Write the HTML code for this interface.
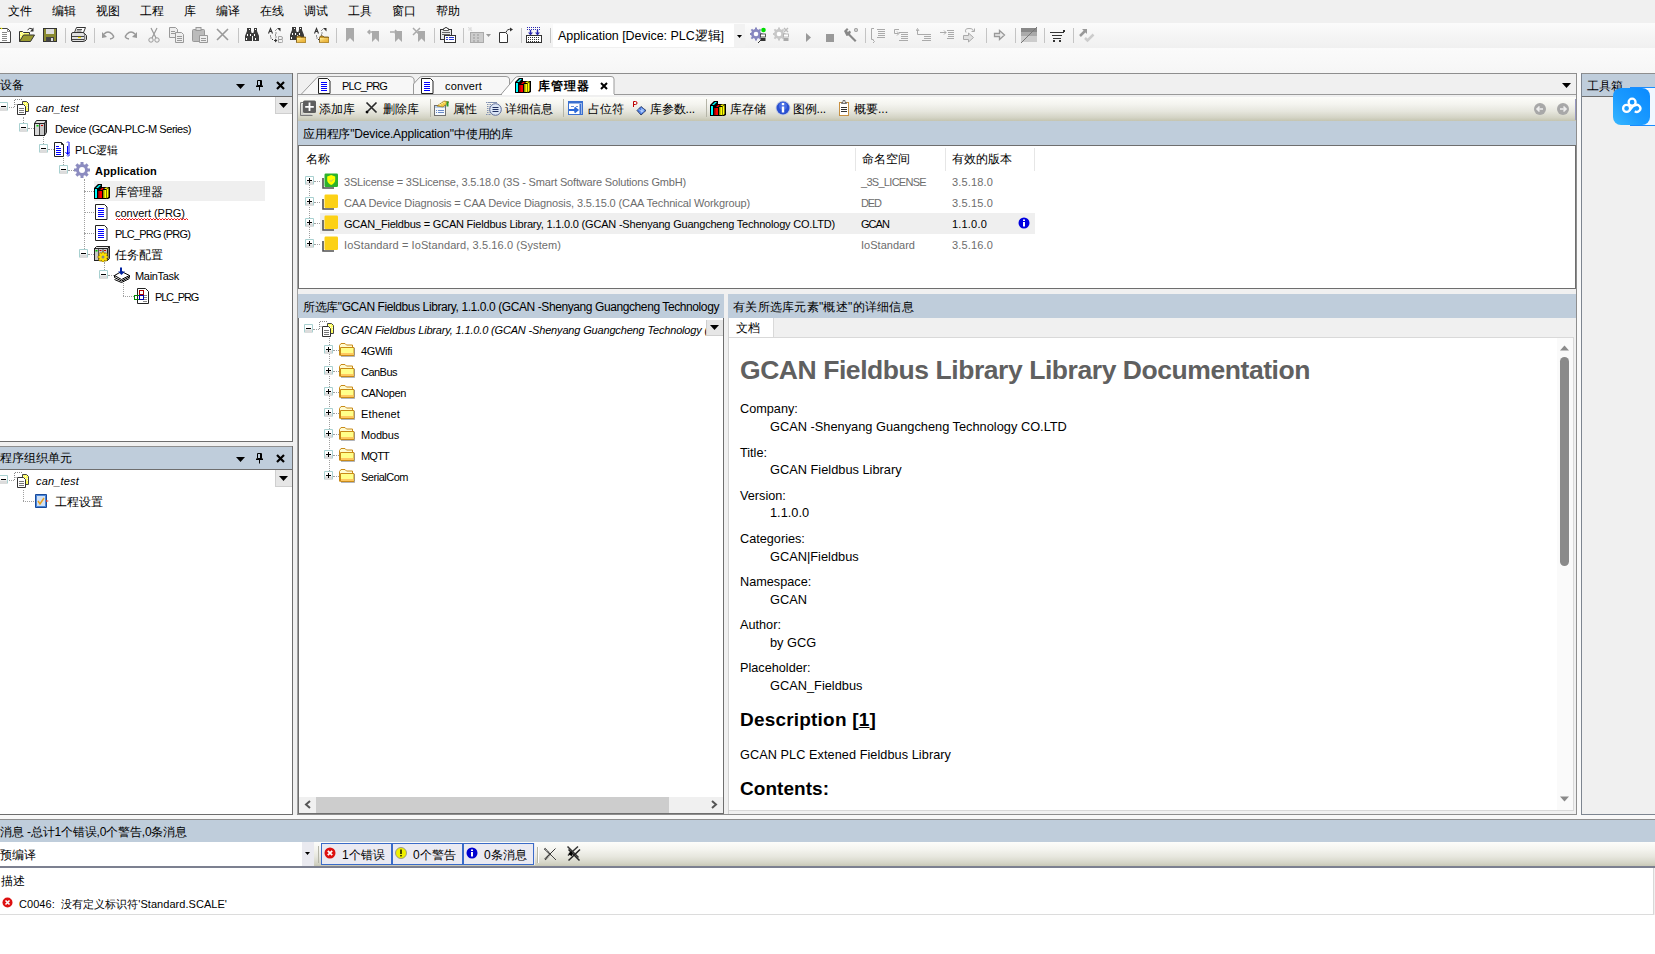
<!DOCTYPE html>
<html><head><meta charset="utf-8"><style>*{box-sizing:border-box;margin:0;padding:0}
html,body{width:1655px;height:954px;overflow:hidden;background:#f0f0f0;font-family:"Liberation Sans",sans-serif;font-size:12px;color:#000;position:relative}
.a{position:absolute}
.t{position:absolute;white-space:nowrap}
svg.a{overflow:visible}
</style></head><body>
<svg width="0" height="0" style="position:absolute">
<defs>
<linearGradient id="gfold" x1="0" y1="0" x2="1" y2="1"><stop offset="0" stop-color="#fff4a0"/><stop offset="0.5" stop-color="#f0c050"/><stop offset="1" stop-color="#e8b030"/></linearGradient>
<symbol id="i-proj" viewBox="0 0 16 16">
 <path d="M0.5 8V0.5H8" stroke="#888" stroke-dasharray="1 1" fill="none"/>
 <path d="M8.5 2.5h4l2 2v8h-6z" fill="#ffff60" stroke="#444"/>
 <path d="M9 4l1 1M11 4l1 1M9 6l1 1M11 6l1 1M13 6l1 1M9 8l1 1M11 8l1 1M13 8l1 1" stroke="#fff" stroke-width="0.8"/>
 <path d="M3.5 5.5h6l2 2v8h-8z" fill="#fff" stroke="#333"/>
 <path d="M5 9.5h5M5 11.5h5M5 13.5h5" stroke="#777"/>
 <path d="M0.5 5.5h3" stroke="#888" stroke-dasharray="1 1"/>
</symbol>
<symbol id="i-dev" viewBox="0 0 16 16">
 <path d="M0.5 3.5l2-3h10l-2 3z" fill="#e0e0e0" stroke="#222" stroke-linejoin="round"/>
 <path d="M10.5 3.5l2-3v12l-2 3z" fill="#888" stroke="#222" stroke-linejoin="round"/>
 <rect x="0.5" y="3.5" width="10" height="12" fill="#c8c8c8" stroke="#222"/>
 <rect x="1" y="4" width="4.5" height="11" fill="#d8d8d8"/>
 <path d="M5.5 4v11" stroke="#444"/>
 <rect x="2.5" y="5" width="2" height="1.5" fill="#0c0"/>
 <rect x="7" y="5" width="2" height="1" fill="#c00"/>
</symbol>
<symbol id="i-plc" viewBox="0 0 16 16">
 <path d="M0.5 1.5h7l2 2v12h-9z" fill="#fff" stroke="#222"/>
 <path d="M7.5 1.5v2h2" fill="none" stroke="#222"/>
 <path d="M2 5.5h3M2 7.5h5M2 9.5h5M2 11.5h5M2 13.5h5" stroke="#00f"/>
 <path d="M13 1.5a1 1 0 0 1 2 1v11a1 1 0 0 1-2 1" stroke="#00f" fill="none"/>
 <path d="M13.5 5v8M11.5 11l2 2.5 2-2.5" stroke="#00f" fill="none"/>
</symbol>
<symbol id="i-gear" viewBox="0 0 16 16">
 <g fill="#8c8cc0">
 <circle cx="8" cy="8" r="6"/>
 <rect x="6.5" y="0" width="3" height="16"/>
 <rect x="0" y="6.5" width="16" height="3"/>
 <rect x="6.5" y="0" width="3" height="16" transform="rotate(45 8 8)"/>
 <rect x="6.5" y="0" width="3" height="16" transform="rotate(-45 8 8)"/>
 </g>
 <circle cx="8" cy="8" r="3" fill="#fff"/>
</symbol>
<symbol id="i-lib" viewBox="0 0 16 16">
 <path d="M0 5L4 1h4v3h8v11l-2 1H0z" fill="#000"/>
 <rect x="1" y="6" width="2" height="9" fill="#00ffff"/>
 <path d="M2 5l3-3h2l-3 3z" fill="#00ffff"/>
 <rect x="4" y="8" width="4" height="7" fill="#ff0000"/>
 <rect x="4" y="8" width="1.5" height="7" fill="#900000"/>
 <path d="M6 7l2-2h2l-2 2z" fill="#ff0000"/>
 <rect x="9" y="7" width="3" height="8" fill="#ffff00"/>
 <rect x="9" y="7" width="1.5" height="8" fill="#909000"/>
 <path d="M12.5 6.5l2-1.5v9l-2 1.5z" fill="#ffff00"/>
 <path d="M10 6l2-1.5h2.5l-2 1.5z" fill="#ffff00"/>
</symbol>
<symbol id="i-pou" viewBox="0 0 16 16">
 <path d="M1.5 0.5h9l2.5 2.5v12.5h-11.5z" fill="#fff" stroke="#222"/>
 <path d="M4 4.5h6M4 6.5h6M4 8.5h6M4 10.5h6M4 12.5h6" stroke="#00f"/>
</symbol>
<symbol id="i-task" viewBox="0 0 16 16">
 <path d="M0.5 2.5l2-2h13l-2 2z" fill="#e8e8e8" stroke="#222"/>
 <rect x="0.5" y="2.5" width="13" height="12" fill="#c8c8c8" stroke="#222"/>
 <path d="M13.5 2.5l2-2v12l-2 2z" fill="#888" stroke="#222"/>
 <path d="M4.5 3v11M9 3v11" stroke="#555"/>
 <rect x="1.5" y="4" width="2" height="1.5" fill="#0c0"/>
 <rect x="5.5" y="4" width="2" height="1" fill="#c00"/>
 <rect x="10" y="4" width="2" height="1" fill="#c00"/>
 <g transform="translate(9 11)"><g fill="#ffe000" stroke="#806000" stroke-width="0.6">
 <path d="M-1 -5h2l0.5 1.6 1.6-0.9 1.4 1.4-0.9 1.6L5 -1v2l-1.4 0.3 0.9 1.6-1.4 1.4-1.6-0.9L1 5h-2l-0.5-1.6-1.6 0.9-1.4-1.4 0.9-1.6L-5 1v-2l1.6-0.5-0.9-1.6 1.4-1.4 1.6 0.9z"/></g>
 <circle r="1.5" fill="#888"/></g>
</symbol>
<symbol id="i-mtask" viewBox="0 0 16 16">
 <path d="M0.5 10.5l7 3.5 8-4" stroke="#000" fill="none"/>
 <path d="M0.5 12.5l7 3 8-4" stroke="#000" fill="none"/>
 <path d="M0.5 8.5l7-4 8 4-8 4z" fill="#fff" stroke="#000" stroke-linejoin="round"/>
 <path d="M0.5 8.5v2M15.5 8.5v2" stroke="#000"/>
 <path d="M7 0.5v5" stroke="#0020a0" stroke-width="2"/>
 <path d="M4 4.5l3.5 3.5 3.5-3.5z" fill="#0020a0"/>
</symbol>
<symbol id="i-call" viewBox="0 0 16 16">
 <path d="M3.5 0.5h8l3 3v12h-11z" fill="#fff" stroke="#222"/>
 <path d="M9 7.5h4M9 9.5h4M9 11.5h4M9 13.5h4" stroke="#888"/>
 <rect x="5.5" y="2.5" width="4" height="4" fill="none" stroke="#a00"/>
 <rect x="0.5" y="7.5" width="5" height="4" fill="none" stroke="#080"/>
 <rect x="5.5" y="7.5" width="4" height="4" fill="none" stroke="#00a"/>
</symbol>
<symbol id="i-settings" viewBox="0 0 16 16">
 <path d="M1.5 1.5h11v13h-11z" fill="#4a86d8" stroke="#1a4a9a"/>
 <rect x="3" y="3" width="8" height="10" fill="#cfe0f5"/>
 <path d="M4 8l2 3 4-6" stroke="#e8a020" stroke-width="1.5" fill="none"/>
 <path d="M12 9l3-1-3-1z" fill="#e04020"/>
</symbol>
<symbol id="i-folder" viewBox="0 0 16 16">
 <path d="M0.5 13.5V3.5l1.5-2h4l1.5 1.5h6v2.5" fill="#fffbd0" stroke="#c88a18"/>
 <path d="M1.5 13.5V5.5h13.5v8z" fill="#ffff8a" stroke="#c88a18"/>
 <rect x="2" y="11" width="12.5" height="2" fill="#ffc860"/>
 <path d="M2 14.5h13.5V6" stroke="#404858" stroke-opacity="0.4" fill="none"/>
</symbol>
<symbol id="i-libyel" viewBox="0 0 16 16">
 <path d="M1 5v10h11" fill="none" stroke="#505050" stroke-width="1.6"/>
 <rect x="2.5" y="0.5" width="13.5" height="13.5" rx="1.2" fill="#fcd116"/>
</symbol>
<symbol id="i-lic" viewBox="0 0 16 16">
 <path d="M1 5v10h11" fill="none" stroke="#505050" stroke-width="1.6"/>
 <rect x="2.5" y="0.5" width="13.5" height="13.5" rx="1.2" fill="#2db32d"/>
 <path d="M9.2 2l4 1.5v3.5c0 2.5-2 4-4 5-2-1-4-2.5-4-5V3.5z" fill="#ffff00"/>
 <path d="M7.8 7.2l1.3 1.3 2.2-2.2" stroke="#9a9" fill="none" stroke-width="0.8"/>
</symbol>
<symbol id="i-plus" viewBox="0 0 9 9">
 <rect x="0" y="0" width="9" height="9" fill="#fff"/>
 <path d="M0.5 8.5V0.5h8v8" fill="none" stroke="#a8d0d0"/>
 <rect x="1" y="5.5" width="7" height="3.5" fill="#dcdcdc"/>
 <path d="M2 4.5h5M4.5 2v5" stroke="#000"/>
</symbol>

<symbol id="i-minus" viewBox="0 0 9 9">
 <rect x="0" y="0" width="9" height="9" fill="#fff"/>
 <path d="M0.5 8.5V0.5h8v8" fill="none" stroke="#a8d0d0"/>
 <rect x="1" y="5.5" width="7" height="3.5" fill="#dcdcdc"/>
 <path d="M2 4.5h5" stroke="#000"/>
</symbol>
<symbol id="t-new" viewBox="0 0 16 16">
 <path d="M3.5 1.5h8l3 3v11h-11z" fill="#fff" stroke="#444"/>
 <path d="M11.5 1.5v3h3" fill="none" stroke="#888"/>
 <path d="M6 5.5h5M6 7.5h5M6 9.5h5M6 11.5h5M6 13.5h5" stroke="#888"/>
 <path d="M4 0l-2 3M0 3h3M1 6l2-1.5M5 2l1-1" stroke="#f0f000" stroke-width="1.2"/>
</symbol>
<symbol id="t-open" viewBox="0 0 16 16">
 <path d="M0.5 14.5v-10h3l1 1h6v2" fill="#ffff70" stroke="#333"/>
 <path d="M1 6l2 2M1 9l2 2M3 5l2 2" stroke="#fff" stroke-width="0.7"/>
 <path d="M0.5 14.5l4-6.5h11l-4 6.5z" fill="#9a9a30" stroke="#333"/>
 <path d="M8.5 3q2-3 5-1" stroke="#333" fill="none"/>
 <path d="M14.5 0.5v4h-3.5z" fill="#333"/>
</symbol>
<symbol id="t-save" viewBox="0 0 16 16">
 <rect x="1.5" y="1.5" width="13" height="13" fill="#8a8a30" stroke="#333"/>
 <rect x="4" y="2" width="8" height="5" fill="#ddd"/>
 <rect x="4" y="10" width="8" height="4.5" fill="#444"/>
 <rect x="9" y="11" width="2" height="3" fill="#ddd"/>
</symbol>
<symbol id="t-print" viewBox="0 0 16 16">
 <path d="M5.5 0.5h9l-2 5h-9z" fill="#fff" stroke="#333"/>
 <path d="M6 2.5h5M5.5 4h5" stroke="#555"/>
 <rect x="0.5" y="5.5" width="13" height="9" rx="1.5" fill="#e0e0e0" stroke="#333"/>
 <path d="M1 9.5h12M1 12.5h12" stroke="#444"/>
 <path d="M7 10.5h3" stroke="#f0e000" stroke-width="1.2"/>
 <path d="M13.5 6.5l2 2v4l-2 2" fill="#ccc" stroke="#333"/>
</symbol>
<symbol id="t-undo" viewBox="0 0 16 16">
 <path d="M4 7q4-4 8 0t-2 5" stroke="#999" stroke-width="1.5" fill="none"/>
 <path d="M2 11V5l5 5z" fill="#999"/>
</symbol>
<symbol id="t-redo" viewBox="0 0 16 16">
 <path d="M12 7q-4-4-8 0t2 5" stroke="#999" stroke-width="1.5" fill="none"/>
 <path d="M14 11V5l-5 5z" fill="#999"/>
</symbol>
<symbol id="t-cut" viewBox="0 0 16 16">
 <path d="M5 1l5 10M11 1L6 11" stroke="#999" stroke-width="1.2"/>
 <circle cx="5" cy="13" r="2.2" fill="none" stroke="#999"/><circle cx="11" cy="13" r="2.2" fill="none" stroke="#999"/>
</symbol>
<symbol id="t-copy" viewBox="0 0 16 16">
 <path d="M0.5 0.5h6l2 2v8h-8z" fill="#eee" stroke="#999"/>
 <path d="M6.5 5.5h6l2 2v8h-8z" fill="#eee" stroke="#999"/>
 <path d="M8 9.5h5M8 11.5h5M8 13.5h5M2 4.5h4M2 6.5h4" stroke="#999"/>
</symbol>
<symbol id="t-paste" viewBox="0 0 16 16">
 <rect x="0.5" y="2.5" width="12" height="12" rx="1" fill="#bbb" stroke="#999"/>
 <rect x="4" y="0.5" width="5" height="3" fill="#ddd" stroke="#999"/>
 <path d="M7.5 8.5h8v7h-8z" fill="#eee" stroke="#999"/>
 <path d="M9 11.5h5M9 13.5h5" stroke="#999"/>
</symbol>
<symbol id="t-del" viewBox="0 0 16 16">
 <path d="M2 2l11 11M13 2L2 13" stroke="#999" stroke-width="1.6"/>
</symbol>
<symbol id="t-find" viewBox="0 0 16 16"><path d="M4 1h3v3l1 3v7H1V9l2-5V1z M10 1h3v3l2 5v5H9V7l1-3z M7 6h3v3H7z" fill="#3a3a3a"/>
 <rect x="5" y="2" width="1" height="1" fill="#fff"/><rect x="11" y="2" width="1" height="1" fill="#fff"/>
 <rect x="3" y="7" width="1" height="2" fill="#fff"/><rect x="6" y="7" width="1" height="2" fill="#fff"/>
 <rect x="10" y="7" width="1" height="2" fill="#fff"/>
 <rect x="2" y="11" width="1" height="2" fill="#fff"/><rect x="11" y="11" width="1" height="2" fill="#fff"/></symbol>
<symbol id="t-repl" viewBox="0 0 16 16"><path d="M1.5 6.5L3.5 1.5 5.5 6.5M2.3 4.5h2.4" stroke="#333" fill="none" stroke-width="1.1"/>
 <path d="M3.5 8.5v1M4 10.5v1M5 12.5h1M7 13.5h1" stroke="#333"/>
 <path d="M8.5 3.5l1-1M9 5.5v1M8.5 7.5v1M9 9.5v1" stroke="#333"/>
 <path d="M10 1h3.5v3.5z" fill="#333"/>
 <path d="M8 11.5l2.5 2-2.5 2z" fill="#333"/>
 <path d="M11.5 9.5h2.5a1.5 1.5 0 0 1 0 3h-2.5v-3M11.5 12.5h3a1.5 1.5 0 0 1 0 3h-3z" stroke="#999" fill="none" stroke-width="0.9"/>
</symbol>
<symbol id="t-findp" viewBox="0 0 16 16"><g transform="translate(-1 -1)"><path d="M4 1h3v3l1 3v7H1V9l2-5V1z M10 1h3v3l2 5v5H9V7l1-3z M7 6h3v3H7z" fill="#3a3a3a"/>
 <rect x="5" y="2" width="1" height="1" fill="#fff"/><rect x="11" y="2" width="1" height="1" fill="#fff"/>
 <rect x="3" y="7" width="1" height="2" fill="#fff"/><rect x="6" y="7" width="1" height="2" fill="#fff"/>
 <rect x="10" y="7" width="1" height="2" fill="#fff"/>
 <rect x="2" y="11" width="1" height="2" fill="#fff"/><rect x="11" y="11" width="1" height="2" fill="#fff"/></g><path d="M6.5 15.5v-5l1-1.5h2.5l1 1h4.5v5.5z" fill="#c89a30" stroke="#705010" stroke-width="0.8"/>
 <path d="M7 11h8.5v4.5H7z" fill="url(#gfold)"/></symbol>
<symbol id="t-replp" viewBox="0 0 16 16"><path d="M1.5 6.5L3.5 1.5 5.5 6.5M2.3 4.5h2.4" stroke="#333" fill="none" stroke-width="1.1"/>
 <path d="M3.5 8.5v1M4 10.5v1M5 12.5h1M7 13.5h1" stroke="#333"/>
 <path d="M8.5 3.5l1-1M9 5.5v1M8.5 7.5v1M9 9.5v1" stroke="#333"/>
 <path d="M10 1h3.5v3.5z" fill="#333"/><path d="M6.5 15.5v-5l1-1.5h2.5l1 1h4.5v5.5z" fill="#c89a30" stroke="#705010" stroke-width="0.8"/>
 <path d="M7 11h8.5v4.5H7z" fill="url(#gfold)"/></symbol>
<symbol id="t-bm" viewBox="0 0 16 16"><path d="M3 1h8v14l-4-4-4 4z" fill="#aaa"/></symbol>
<symbol id="t-bmprev" viewBox="0 0 16 16"><path d="M6 4h7v11l-3.5-3.5L6 15z" fill="#aaa"/><path d="M8 5H2M4 3L2 5l2 2" stroke="#aaa" stroke-width="1.5" fill="none"/></symbol>
<symbol id="t-bmnext" viewBox="0 0 16 16"><path d="M6 4h7v11l-3.5-3.5L6 15z" fill="#aaa"/><path d="M1 5h7M6 3l2 2-2 2" stroke="#aaa" stroke-width="1.5" fill="none"/></symbol>
<symbol id="t-bmclr" viewBox="0 0 16 16"><path d="M6 4h7v11l-3.5-3.5L6 15z" fill="#aaa"/><path d="M1 1l7 7M8 1L1 8" stroke="#aaa" stroke-width="1.5"/></symbol>
<symbol id="t-pastep" viewBox="0 0 16 16">
 <rect x="0.5" y="2.5" width="11" height="10" fill="#e8e8e8" stroke="#333"/>
 <path d="M3.5 3.5v-2h1.5v-1h2v1h1.5v2z" fill="#fff" stroke="#333" stroke-width="0.8"/>
 <path d="M2 5.5h8M2 7.5h8" stroke="#666"/>
 <rect x="4.5" y="8.5" width="11" height="7" fill="#fff" stroke="#333"/>
 <path d="M6 10.5h2M9 10.5h5M6 12.5h2M9 12.5h5" stroke="#2a3ad0"/>
</symbol>
<symbol id="t-grid" viewBox="0 0 16 16">
 <rect x="2.5" y="5.5" width="13" height="10" fill="#ccc" stroke="#aaa"/>
 <path d="M5 8h2M9 8h2M5 11h2M9 11h2M5 14h2M9 14h2" stroke="#999"/>
 <path d="M0 0l4 4M3 0v3M0 3h3" stroke="#ddd" stroke-width="1.2"/>
</symbol>
<symbol id="t-docarr" viewBox="0 0 16 16">
 <path d="M1.5 5.5h6l2 2v8h-8z" fill="#fff" stroke="#333"/>
 <path d="M8 5.5q1-4 5.5-3" stroke="#333" fill="none"/>
 <path d="M12 0.5l3 2-3 2z" fill="#333"/>
</symbol>
<symbol id="t-dl" viewBox="0 0 16 16">
 <rect x="0.5" y="8.5" width="15" height="7" fill="#fff" stroke="#333"/>
 <path d="M2 10.5h12M2 12.5h12M2 14.5h12" stroke="#333" stroke-dasharray="1 1"/>
 <path d="M1 0.5h14M1 2.5h14" stroke="#2a2ab0" stroke-dasharray="1 1"/>
 <path d="M4.5 3v4M11.5 3v4" stroke="#2a2ab0" stroke-width="1.4"/>
 <path d="M2 5.5l2.5 3 2.5-3zM9 5.5l2.5 3 2.5-3z" fill="#2a2ab0"/>
</symbol>
<symbol id="t-login" viewBox="0 0 16 16">
 <g fill="#8888c0"><circle cx="6" cy="7" r="5"/><rect x="5" y="0.5" width="2" height="13"/><rect x="-0.5" y="6" width="13" height="2"/><rect x="5" y="0.5" width="2" height="13" transform="rotate(45 6 7)"/><rect x="5" y="0.5" width="2" height="13" transform="rotate(-45 6 7)"/></g>
 <circle cx="6" cy="7" r="2.3" fill="#fff"/>
 <circle cx="13.5" cy="3" r="2.3" fill="#0d0"/>
 <rect x="10.5" y="7" width="5" height="3" fill="#fff" stroke="#333" stroke-width="0.8"/>
 <rect x="10.5" y="11" width="5" height="3" fill="#333"/>
 <path d="M8 16l3-3" stroke="#333"/>
</symbol>
<symbol id="t-logout" viewBox="0 0 16 16">
 <g fill="#c8c8c8"><circle cx="6" cy="7" r="5"/><rect x="5" y="0.5" width="2" height="13"/><rect x="-0.5" y="6" width="13" height="2"/><rect x="5" y="0.5" width="2" height="13" transform="rotate(45 6 7)"/><rect x="5" y="0.5" width="2" height="13" transform="rotate(-45 6 7)"/></g>
 <circle cx="6" cy="7" r="2.3" fill="#fff"/>
 <path d="M11 1l4 4M15 1l-4 4" stroke="#bbb" stroke-width="1.4"/>
 <rect x="10.5" y="7" width="5" height="3" fill="#fff" stroke="#aaa" stroke-width="0.8"/>
 <rect x="10.5" y="11" width="5" height="3" fill="#aaa"/>
</symbol>
<symbol id="t-play" viewBox="0 0 16 16"><path d="M5 6v9l5-4.5z" fill="#999"/></symbol>
<symbol id="t-stop" viewBox="0 0 16 16"><rect x="4" y="7" width="8" height="8" fill="#999"/></symbol>
<symbol id="t-wrench" viewBox="0 0 16 16"><path d="M1 4l3-3 1.5 1.5-1.5 1.5 1 1 1.5-1.5L8 5 7 7l6.5 6.5-1.5 1.5L5.5 8.5 3.5 9z" fill="#888"/><circle cx="13" cy="3" r="2" fill="#999"/><circle cx="13" cy="3" r="1" fill="#ddd"/></symbol>
<symbol id="t-st1" viewBox="0 0 16 16"><path d="M4 1.5H1.5v11h2" stroke="#aaa" fill="none"/><path d="M2.5 12.5l2 2-2 2" stroke="#aaa" fill="none"/><path d="M7 2.5h8M8 4.5h7M8 6.5h7M8 8.5h7M7 10.5h8" stroke="#aaa"/></symbol>
<symbol id="t-st2" viewBox="0 0 16 16"><path d="M6 2.5H1.5v4h4" stroke="#aaa" fill="none"/><path d="M4 4.5l2 2-2 2" stroke="#aaa" fill="none"/><path d="M6 5.5h9M8 7.5h7M8 9.5h7M8 11.5h7M6 13.5h9" stroke="#aaa"/></symbol>
<symbol id="t-st3" viewBox="0 0 16 16"><path d="M1.5 3v4.5h5" stroke="#aaa" fill="none"/><path d="M0 4l1.5-2.5L3 4" stroke="#aaa" fill="none"/><path d="M6 7.5h9M8 9.5h7M8 11.5h7M6 13.5h9" stroke="#aaa"/></symbol>
<symbol id="t-st4" viewBox="0 0 16 16"><path d="M1 5.5h6M5 3.5l2 2-2 2" stroke="#aaa" fill="none"/><path d="M8 3.5h7M9 5.5h6M9 7.5h6M9 9.5h6M8 11.5h7" stroke="#aaa"/></symbol>
<symbol id="t-st5" viewBox="0 0 16 16"><path d="M4 5.5q-2-4 3-4t4 3" stroke="#aaa" fill="none"/><path d="M9.5 4.5h3v-3" stroke="#aaa" fill="none"/><path d="M1.5 8.5h5v-2.5l5 4.5-5 4.5v-2.5h-5z" fill="#e0e0e0" stroke="#aaa"/></symbol>
<symbol id="t-arrow" viewBox="0 0 16 16"><path d="M2.5 6.5h5v-3l5 4.5-5 4.5v-3h-5z" fill="#eee" stroke="#999" stroke-width="1.3"/></symbol>
<symbol id="t-flag" viewBox="0 0 16 16"><rect x="0" y="1" width="16" height="4" fill="#888"/><rect x="0" y="5" width="16" height="4" fill="#aaa"/><rect x="0" y="9" width="16" height="6" fill="#ccc"/><path d="M0 16L16 0" stroke="#777"/></symbol>
<symbol id="t-cart" viewBox="0 0 16 16"><path d="M0 5.5h14M2 8.5h10M3 11.5h8" stroke="#333" stroke-width="1.2"/><rect x="3" y="13" width="2" height="2" fill="#333"/><rect x="9" y="13" width="2" height="2" fill="#333"/><rect x="13" y="3" width="2" height="2" fill="#333"/></symbol>
<symbol id="t-check" viewBox="0 0 16 16"><path d="M1 9l5-5" stroke="#999" stroke-width="2.5"/><path d="M3 2h5v5z" fill="#999"/><path d="M6 11l2.5 2.5 6-6" stroke="#ccc" stroke-width="2.5" fill="none"/></symbol>
<symbol id="e-add" viewBox="0 0 16 16">
 <path d="M3.5 2.5h-2a1 1 0 0 0-1 1v11a1 1 0 0 0 1 1h11" fill="none" stroke="#7a7a7a" stroke-width="1.2"/>
 <path d="M2.5 4v10.5h9" fill="none" stroke="#c8c8c8"/>
 <rect x="3" y="0.5" width="13" height="12.5" rx="1.5" fill="#5e5e5e"/>
 <path d="M9.5 2.5v8.5M5.2 6.8h8.6" stroke="#fff" stroke-width="1.8"/>
</symbol>
<symbol id="e-del" viewBox="0 0 16 16">
 <path d="M2.5 2.5l10 10M12.5 2.5l-10 10" stroke="#2a2a2a" stroke-width="1.7"/>
 <path d="M2.2 12.8l1.5-1.5" stroke="#000" stroke-width="2.5"/>
</symbol>
<symbol id="e-prop" viewBox="0 0 16 16">
 <rect x="0.5" y="5.5" width="11" height="10" fill="#f4f8fc" stroke="#707070"/>
 <path d="M1 6h10v2H1z" fill="#b8d0ec"/>
 <path d="M2 10.5h1M4 10.5h6M2 12.5h1M4 12.5h6" stroke="#6a8ac8"/>
 <path d="M3 6l7-5 5 1-6 5z" fill="#f0c840" stroke="#907020" stroke-width="0.7"/>
 <path d="M5 4l2 1M7 3l2 1M9 2l2 1" stroke="#fff8c0" stroke-width="0.8"/>
 <path d="M13.5 1.5v5" stroke="#2a9a2a" stroke-width="2"/>
</symbol>
<symbol id="e-det" viewBox="0 0 16 16">
 <path d="M0 2.5h6M1 4.5h4M1 6.5h4M1 8.5h4M1 10.5h4M1 12.5h4M0 14.5h5" stroke="#8090b0" stroke-dasharray="1 0.5"/>
 <path d="M2 2.5h9" stroke="#8090b0"/>
 <circle cx="9.5" cy="9.5" r="5.8" fill="#dce6f6" stroke="#5a6a98"/>
 <path d="M6.5 7.5h6M6.5 9.5h6M6.5 11.5h6" stroke="#203060"/>
</symbol>
<symbol id="e-ph" viewBox="0 0 16 16">
 <rect x="0.5" y="1.5" width="14" height="13" fill="#fff" stroke="#3a70d0"/>
 <rect x="0" y="1" width="15" height="2.5" fill="#3a70d0"/>
 <path d="M12.5 4v10" stroke="#3a70d0" stroke-width="2"/>
 <path d="M3 6.5h3M8 6.5h2" stroke="#6a90d8"/>
 <path d="M1 10h8M6.5 7.5L9.5 10l-3 2.5" stroke="#2a68d8" stroke-width="2" fill="none"/>
</symbol>
<symbol id="e-param" viewBox="0 0 16 16">
 <path d="M1.5 7V1.5h2a1.5 1.5 0 0 1 0 3h-2" stroke="#c00000" fill="none"/>
 <path d="M9 6.5l5 4-5 4.5-4-4.5z" fill="#4a7ae0" stroke="#1a2a50" stroke-width="0.8"/>
 <path d="M9 7.5l3.5 3-3.5 3z" fill="#8ab4f8"/>
 <path d="M6.5 9.5l5 2.5M8 12.5l4-4" stroke="#d0e0ff" stroke-width="0.6"/>
</symbol>
<symbol id="e-info" viewBox="0 0 16 16">
 <circle cx="8" cy="8" r="7.5" fill="#c8d0e0"/>
 <circle cx="8" cy="8" r="6.5" fill="#2a50d0"/>
 <circle cx="8" cy="6" r="4" fill="#5a80f0" opacity="0.6"/>
 <rect x="6.8" y="6.5" width="2.4" height="6" fill="#fff"/>
 <rect x="6.8" y="3" width="2.4" height="2.2" fill="#fff"/>
</symbol>
<symbol id="e-clip" viewBox="0 0 16 16">
 <rect x="3.5" y="2.5" width="9" height="13" fill="#fff" stroke="#c89040"/>
 <path d="M5.5 3.5v-1h1.5v-2h2v2h1.5v1z" fill="#fff" stroke="#555" stroke-width="0.8"/>
 <path d="M5 7.5h6M5 9.5h6M5 11.5h6" stroke="#333"/>
</symbol>
</defs>
</svg>

<div class="a" style="left:0px;top:0px;width:1655px;height:23px;background:#f0f0f0"></div>
<div class="a" style="left:0px;top:23px;width:1655px;height:25px;background:linear-gradient(#fbfbfb,#f4f4f4 60%,#f0f0f0)"></div>
<div class="a" style="left:0px;top:48px;width:1655px;height:25px;background:linear-gradient(#fbfbfb,#f6f6f6)"></div>
<div class="a" style="left:65px;top:28px;width:1px;height:15px;background:#c4c4c4"></div>
<div class="a" style="left:94px;top:28px;width:1px;height:15px;background:#c4c4c4"></div>
<div class="a" style="left:238px;top:28px;width:1px;height:15px;background:#c4c4c4"></div>
<div class="a" style="left:336px;top:28px;width:1px;height:15px;background:#c4c4c4"></div>
<div class="a" style="left:434px;top:28px;width:1px;height:15px;background:#c4c4c4"></div>
<div class="a" style="left:463px;top:28px;width:1px;height:15px;background:#c4c4c4"></div>
<div class="a" style="left:521px;top:28px;width:1px;height:15px;background:#c4c4c4"></div>
<div class="a" style="left:550px;top:28px;width:1px;height:15px;background:#c4c4c4"></div>
<div class="a" style="left:865px;top:28px;width:1px;height:15px;background:#c4c4c4"></div>
<div class="a" style="left:986px;top:28px;width:1px;height:15px;background:#c4c4c4"></div>
<div class="a" style="left:1015px;top:28px;width:1px;height:15px;background:#c4c4c4"></div>
<div class="a" style="left:1044px;top:28px;width:1px;height:15px;background:#c4c4c4"></div>
<div class="a" style="left:1073px;top:28px;width:1px;height:15px;background:#c4c4c4"></div>
<svg class="a" width="16" height="16" style="left:-4px;top:27px;"><use href="#t-new"/></svg>
<svg class="a" width="16" height="16" style="left:19px;top:27px;"><use href="#t-open"/></svg>
<svg class="a" width="16" height="16" style="left:42px;top:27px;"><use href="#t-save"/></svg>
<svg class="a" width="16" height="16" style="left:71px;top:27px;"><use href="#t-print"/></svg>
<svg class="a" width="16" height="16" style="left:100px;top:27px;"><use href="#t-undo"/></svg>
<svg class="a" width="16" height="16" style="left:123px;top:27px;"><use href="#t-redo"/></svg>
<svg class="a" width="16" height="16" style="left:146px;top:27px;"><use href="#t-cut"/></svg>
<svg class="a" width="16" height="16" style="left:169px;top:27px;"><use href="#t-copy"/></svg>
<svg class="a" width="16" height="16" style="left:192px;top:27px;"><use href="#t-paste"/></svg>
<svg class="a" width="16" height="16" style="left:215px;top:27px;"><use href="#t-del"/></svg>
<svg class="a" width="16" height="16" style="left:244px;top:27px;"><use href="#t-find"/></svg>
<svg class="a" width="16" height="16" style="left:267px;top:27px;"><use href="#t-repl"/></svg>
<svg class="a" width="16" height="16" style="left:290px;top:27px;"><use href="#t-findp"/></svg>
<svg class="a" width="16" height="16" style="left:313px;top:27px;"><use href="#t-replp"/></svg>
<svg class="a" width="16" height="16" style="left:343px;top:27px;"><use href="#t-bm"/></svg>
<svg class="a" width="16" height="16" style="left:366px;top:27px;"><use href="#t-bmprev"/></svg>
<svg class="a" width="16" height="16" style="left:389px;top:27px;"><use href="#t-bmnext"/></svg>
<svg class="a" width="16" height="16" style="left:412px;top:27px;"><use href="#t-bmclr"/></svg>
<svg class="a" width="16" height="16" style="left:440px;top:27px;"><use href="#t-pastep"/></svg>
<svg class="a" width="16" height="16" style="left:468px;top:27px;"><use href="#t-grid"/></svg>
<svg class="a" width="16" height="16" style="left:498px;top:27px;"><use href="#t-docarr"/></svg>
<svg class="a" width="16" height="16" style="left:526px;top:27px;"><use href="#t-dl"/></svg>
<svg class="a" width="16" height="16" style="left:750px;top:27px;"><use href="#t-login"/></svg>
<svg class="a" width="16" height="16" style="left:773px;top:27px;"><use href="#t-logout"/></svg>
<svg class="a" width="16" height="16" style="left:801px;top:27px;"><use href="#t-play"/></svg>
<svg class="a" width="16" height="16" style="left:822px;top:27px;"><use href="#t-stop"/></svg>
<svg class="a" width="16" height="16" style="left:843px;top:27px;"><use href="#t-wrench"/></svg>
<svg class="a" width="16" height="16" style="left:870px;top:27px;"><use href="#t-st1"/></svg>
<svg class="a" width="16" height="16" style="left:893px;top:27px;"><use href="#t-st2"/></svg>
<svg class="a" width="16" height="16" style="left:916px;top:27px;"><use href="#t-st3"/></svg>
<svg class="a" width="16" height="16" style="left:939px;top:27px;"><use href="#t-st4"/></svg>
<svg class="a" width="16" height="16" style="left:962px;top:27px;"><use href="#t-st5"/></svg>
<svg class="a" width="16" height="16" style="left:992px;top:27px;"><use href="#t-arrow"/></svg>
<svg class="a" width="16" height="16" style="left:1021px;top:27px;"><use href="#t-flag"/></svg>
<svg class="a" width="16" height="16" style="left:1050px;top:27px;"><use href="#t-cart"/></svg>
<svg class="a" width="16" height="16" style="left:1079px;top:27px;"><use href="#t-check"/></svg>
<svg class="a" width="6" height="4" style="left:486px;top:34px"><path d="M0 0h5l-2.5 3z" fill="#999"/></svg>
<div class="a" style="left:553px;top:24px;width:181px;height:23px;background:#fff"></div>
<div class="a" style="left:734px;top:24px;width:11px;height:23px;background:#f2f2f2"></div>
<svg class="a" width="6" height="4" style="left:737px;top:35px"><path d="M0 0h5l-2.5 3z" fill="#000"/></svg>
<div class="a" style="left:0px;top:97px;width:292px;height:344px;background:#fff"></div>
<div class="a" style="left:292px;top:73px;width:1px;height:369px;background:#6e6e6e"></div>
<div class="a" style="left:0px;top:441px;width:293px;height:1px;background:#6e6e6e"></div>
<div class="a" style="left:0px;top:73px;width:292px;height:1px;background:#8e8e8e"></div>
<div class="a" style="left:0px;top:74px;width:292px;height:22px;background:#bfcddb"></div>
<div class="a" style="left:0px;top:96px;width:292px;height:1px;background:#6e6e6e"></div>
<svg class="a" width="10" height="6" style="left:236px;top:84px"><path d="M0 0h9l-4.5 5z" fill="#000"/></svg>
<svg class="a" width="8" height="11" style="left:256px;top:80px"><path d="M1.5 0.5h4v5h-4z" fill="none" stroke="#000"/><rect x="4" y="1" width="1.5" height="5" fill="#000"/><rect x="0" y="5.5" width="7" height="1.5" fill="#000"/><rect x="3" y="7" width="1" height="3.5" fill="#000"/></svg>
<svg class="a" width="10" height="10" style="left:276px;top:81px"><path d="M1 1l7 7M8 1l-7 7" stroke="#000" stroke-width="2.2"/></svg>
<div class="a" style="left:275px;top:97px;width:17px;height:17px;background:#e6e6e6;border-left:1px solid #cfcfcf;border-bottom:1px solid #cfcfcf"></div>
<svg class="a" width="10" height="6" style="left:279px;top:103px"><path d="M0 0h9l-4.5 5z" fill="#000"/></svg>
<div class="a" style="left:94px;top:181px;width:171px;height:20px;background:#efefef"></div>
<div class="a" style="left:9px;top:107px;width:5px;height:1px;border-top:1px dotted #a0a0a0"></div>
<div class="a" style="left:23px;top:117px;width:1px;height:6px;border-left:1px dotted #a0a0a0"></div>
<div class="a" style="left:28px;top:128px;width:6px;height:1px;border-top:1px dotted #a0a0a0"></div>
<div class="a" style="left:43px;top:137px;width:1px;height:7px;border-left:1px dotted #a0a0a0"></div>
<div class="a" style="left:48px;top:149px;width:6px;height:1px;border-top:1px dotted #a0a0a0"></div>
<div class="a" style="left:63px;top:158px;width:1px;height:7px;border-left:1px dotted #a0a0a0"></div>
<div class="a" style="left:68px;top:170px;width:6px;height:1px;border-top:1px dotted #a0a0a0"></div>
<div class="a" style="left:84px;top:179px;width:1px;height:70px;border-left:1px dotted #a0a0a0"></div>
<div class="a" style="left:84px;top:191px;width:10px;height:1px;border-top:1px dotted #a0a0a0"></div>
<div class="a" style="left:84px;top:212px;width:10px;height:1px;border-top:1px dotted #a0a0a0"></div>
<div class="a" style="left:84px;top:233px;width:10px;height:1px;border-top:1px dotted #a0a0a0"></div>
<div class="a" style="left:88px;top:254px;width:6px;height:1px;border-top:1px dotted #a0a0a0"></div>
<div class="a" style="left:104px;top:262px;width:1px;height:8px;border-left:1px dotted #a0a0a0"></div>
<div class="a" style="left:108px;top:275px;width:6px;height:1px;border-top:1px dotted #a0a0a0"></div>
<div class="a" style="left:123px;top:280px;width:1px;height:16px;border-left:1px dotted #a0a0a0"></div>
<div class="a" style="left:123px;top:296px;width:11px;height:1px;border-top:1px dotted #a0a0a0"></div>
<svg class="a" width="9" height="9" style="left:-1px;top:102px"><use href="#i-minus"/></svg>
<svg class="a" width="16" height="16" style="left:14px;top:99px;"><use href="#i-proj"/></svg>
<svg class="a" width="9" height="9" style="left:19px;top:123px"><use href="#i-minus"/></svg>
<svg class="a" width="16" height="16" style="left:34px;top:120px;"><use href="#i-dev"/></svg>
<svg class="a" width="9" height="9" style="left:39px;top:144px"><use href="#i-minus"/></svg>
<svg class="a" width="16" height="16" style="left:54px;top:141px;"><use href="#i-plc"/></svg>
<svg class="a" width="9" height="9" style="left:59px;top:165px"><use href="#i-minus"/></svg>
<svg class="a" width="16" height="16" style="left:74px;top:162px;"><use href="#i-gear"/></svg>
<svg class="a" width="16" height="16" style="left:94px;top:183px;"><use href="#i-lib"/></svg>
<svg class="a" width="16" height="16" style="left:94px;top:204px;"><use href="#i-pou"/></svg>
<svg class="a" width="16" height="16" style="left:94px;top:225px;"><use href="#i-pou"/></svg>
<svg class="a" width="9" height="9" style="left:79px;top:249px"><use href="#i-minus"/></svg>
<svg class="a" width="16" height="16" style="left:94px;top:246px;"><use href="#i-task"/></svg>
<svg class="a" width="9" height="9" style="left:99px;top:270px"><use href="#i-minus"/></svg>
<svg class="a" width="16" height="16" style="left:114px;top:267px;"><use href="#i-mtask"/></svg>
<svg class="a" width="16" height="16" style="left:134px;top:288px;"><use href="#i-call"/></svg>
<svg class="a" width="72" height="4" style="left:116px;top:218px"><path d="M0 2 l1.5 -1.5 l1.5 1.5 l1.5 -1.5 l1.5 1.5 l1.5 -1.5 l1.5 1.5 l1.5 -1.5 l1.5 1.5 l1.5 -1.5 l1.5 1.5 l1.5 -1.5 l1.5 1.5 l1.5 -1.5 l1.5 1.5 l1.5 -1.5 l1.5 1.5 l1.5 -1.5 l1.5 1.5 l1.5 -1.5 l1.5 1.5 l1.5 -1.5 l1.5 1.5 l1.5 -1.5 l1.5 1.5 l1.5 -1.5 l1.5 1.5 l1.5 -1.5 l1.5 1.5 l1.5 -1.5 l1.5 1.5 l1.5 -1.5 l1.5 1.5 l1.5 -1.5 l1.5 1.5 l1.5 -1.5 l1.5 1.5 l1.5 -1.5 l1.5 1.5 l1.5 -1.5 l1.5 1.5 l1.5 -1.5 l1.5 1.5 l1.5 -1.5 l1.5 1.5 l1.5 -1.5 l1.5 1.5 l1.5 -1.5 l1.5 1.5" stroke="#e00" fill="none" stroke-width="0.9"/></svg>
<div class="a" style="left:0px;top:470px;width:292px;height:344px;background:#fff"></div>
<div class="a" style="left:292px;top:446px;width:1px;height:369px;background:#6e6e6e"></div>
<div class="a" style="left:0px;top:814px;width:293px;height:1px;background:#6e6e6e"></div>
<div class="a" style="left:0px;top:446px;width:292px;height:1px;background:#8e8e8e"></div>
<div class="a" style="left:0px;top:447px;width:292px;height:22px;background:#bfcddb"></div>
<div class="a" style="left:0px;top:469px;width:292px;height:1px;background:#6e6e6e"></div>
<svg class="a" width="10" height="6" style="left:236px;top:457px"><path d="M0 0h9l-4.5 5z" fill="#000"/></svg>
<svg class="a" width="8" height="11" style="left:256px;top:453px"><path d="M1.5 0.5h4v5h-4z" fill="none" stroke="#000"/><rect x="4" y="1" width="1.5" height="5" fill="#000"/><rect x="0" y="5.5" width="7" height="1.5" fill="#000"/><rect x="3" y="7" width="1" height="3.5" fill="#000"/></svg>
<svg class="a" width="10" height="10" style="left:276px;top:454px"><path d="M1 1l7 7M8 1l-7 7" stroke="#000" stroke-width="2.2"/></svg>
<div class="a" style="left:275px;top:470px;width:17px;height:17px;background:#e6e6e6;border-left:1px solid #cfcfcf;border-bottom:1px solid #cfcfcf"></div>
<svg class="a" width="10" height="6" style="left:279px;top:476px"><path d="M0 0h9l-4.5 5z" fill="#000"/></svg>
<div class="a" style="left:9px;top:480px;width:5px;height:1px;border-top:1px dotted #a0a0a0"></div>
<div class="a" style="left:23px;top:490px;width:1px;height:11px;border-left:1px dotted #a0a0a0"></div>
<div class="a" style="left:23px;top:501px;width:11px;height:1px;border-top:1px dotted #a0a0a0"></div>
<svg class="a" width="9" height="9" style="left:-1px;top:475px"><use href="#i-minus"/></svg>
<svg class="a" width="16" height="16" style="left:14px;top:472px;"><use href="#i-proj"/></svg>
<svg class="a" width="16" height="16" style="left:34px;top:493px;"><use href="#i-settings"/></svg>
<div class="a" style="left:297px;top:73px;width:1280px;height:1px;background:#8e8e8e"></div>
<div class="a" style="left:297px;top:73px;width:1px;height:742px;background:#a0a0a0"></div>
<div class="a" style="left:1576px;top:73px;width:1px;height:742px;background:#8e8e8e"></div>
<div class="a" style="left:297px;top:814px;width:1280px;height:1px;background:#8e8e8e"></div>
<div class="a" style="left:298px;top:74px;width:1278px;height:21px;background:#f0f0f0"></div>
<svg class="a" width="10" height="6" style="left:1562px;top:83px"><path d="M0 0h9l-4.5 5z" fill="#000"/></svg>
<svg class="a" width="330" height="22" style="left:298px;top:74px">
<path d="M3 20.5 L19 3.5 Q20 2.5 22 2.5 L112 2.5 Q115 2.5 116 5 L117 20.5" fill="#f7f7f7" stroke="#9a9a9a"/>
<path d="M115.5 20.5 L115.5 10 L121 4 Q122 2.5 125 2.5 L208 2.5 Q211 2.5 211.5 5 L211.5 20.5" fill="#f7f7f7" stroke="#9a9a9a"/>
<path d="M203 20.5 L217 4 Q218 2.5 221 2.5 L313 2.5 Q316 2.5 316 5 L316 21.5 M0 20.5 L3 20.5 M316 20.5 L330 20.5" fill="#fff" stroke="#9a9a9a"/>
</svg>
<div class="a" style="left:298px;top:94px;width:1278px;height:1px;background:#9a9a9a"></div>
<div class="a" style="left:502px;top:94px;width:112px;height:1px;background:#fff"></div>
<svg class="a" width="16" height="16" style="left:317px;top:78px;"><use href="#i-pou"/></svg>
<svg class="a" width="16" height="16" style="left:420px;top:78px;"><use href="#i-pou"/></svg>
<svg class="a" width="16" height="16" style="left:515px;top:77px;"><use href="#i-lib"/></svg>
<svg class="a" width="9" height="9" style="left:600px;top:82px"><path d="M1 1l6 6M7 1l-6 6" stroke="#000" stroke-width="2"/></svg>
<div class="a" style="left:298px;top:95px;width:1278px;height:2px;background:#f0f0f0"></div>
<div class="a" style="left:298px;top:97px;width:1278px;height:24px;background:linear-gradient(#fdfdfa,#f4f4ef 30%,#e6e6dd 60%,#d4d4c6 85%,#c4c4b0)"></div>
<div class="a" style="left:430px;top:99px;width:1px;height:18px;background:#b5b5a8"></div>
<div class="a" style="left:563px;top:99px;width:1px;height:18px;background:#b5b5a8"></div>
<div class="a" style="left:706px;top:99px;width:1px;height:18px;background:#b5b5a8"></div>
<svg class="a" width="16" height="16" style="left:300px;top:100px;"><use href="#e-add"/></svg>
<svg class="a" width="16" height="16" style="left:364px;top:100px;"><use href="#e-del"/></svg>
<svg class="a" width="16" height="16" style="left:434px;top:100px;"><use href="#e-prop"/></svg>
<svg class="a" width="16" height="16" style="left:486px;top:100px;"><use href="#e-det"/></svg>
<svg class="a" width="16" height="16" style="left:568px;top:100px;"><use href="#e-ph"/></svg>
<svg class="a" width="16" height="16" style="left:632px;top:100px;"><use href="#e-param"/></svg>
<svg class="a" width="16" height="16" style="left:710px;top:100px;"><use href="#i-lib"/></svg>
<svg class="a" width="16" height="16" style="left:775px;top:100px;"><use href="#e-info"/></svg>
<svg class="a" width="16" height="16" style="left:836px;top:100px;"><use href="#e-clip"/></svg>
<svg class="a" width="14" height="14" style="left:1533px;top:102px"><circle cx="7" cy="7" r="6" fill="#a8a8a8"/><path d="M10 7H4M6.5 4.5L4 7l2.5 2.5" stroke="#eee" stroke-width="1.6" fill="none"/></svg>
<svg class="a" width="14" height="14" style="left:1556px;top:102px"><circle cx="7" cy="7" r="6" fill="#a8a8a8"/><path d="M4 7h6M7.5 4.5L10 7l-2.5 2.5" stroke="#eee" stroke-width="1.6" fill="none"/></svg>
<div class="a" style="left:298px;top:121px;width:1278px;height:24px;background:#bfcddb"></div>
<div class="a" style="left:298px;top:145px;width:1278px;height:144px;background:#fff;border:1px solid #6e6e6e;border-right:none"></div>
<div class="a" style="left:298px;top:288px;width:1278px;height:1px;background:#6e6e6e"></div>
<div class="a" style="left:1575px;top:145px;width:1px;height:144px;background:#6e6e6e"></div>
<div class="a" style="left:1575px;top:99px;width:1px;height:21px;background:#9898c0"></div>
<div class="a" style="left:855px;top:148px;width:1px;height:23px;background:#e6e6e6"></div>
<div class="a" style="left:945px;top:148px;width:1px;height:23px;background:#e6e6e6"></div>
<div class="a" style="left:1034px;top:148px;width:1px;height:23px;background:#e6e6e6"></div>
<div class="a" style="left:320px;top:213px;width:715px;height:21px;background:#efefef"></div>
<div class="a" style="left:309px;top:185px;width:1px;height:55px;border-left:1px dotted #a0a0a0"></div>
<svg class="a" width="9" height="9" style="left:305px;top:176px"><use href="#i-plus"/></svg>
<div class="a" style="left:314px;top:181px;width:6px;height:1px;border-top:1px dotted #a0a0a0"></div>
<svg class="a" width="16" height="16" style="left:322px;top:173px;"><use href="#i-lic"/></svg>
<svg class="a" width="9" height="9" style="left:305px;top:197px"><use href="#i-plus"/></svg>
<div class="a" style="left:314px;top:202px;width:6px;height:1px;border-top:1px dotted #a0a0a0"></div>
<svg class="a" width="16" height="16" style="left:322px;top:194px;"><use href="#i-libyel"/></svg>
<svg class="a" width="9" height="9" style="left:305px;top:218px"><use href="#i-plus"/></svg>
<div class="a" style="left:314px;top:223px;width:6px;height:1px;border-top:1px dotted #a0a0a0"></div>
<svg class="a" width="16" height="16" style="left:322px;top:215px;"><use href="#i-libyel"/></svg>
<svg class="a" width="9" height="9" style="left:305px;top:239px"><use href="#i-plus"/></svg>
<div class="a" style="left:314px;top:244px;width:6px;height:1px;border-top:1px dotted #a0a0a0"></div>
<svg class="a" width="16" height="16" style="left:322px;top:236px;"><use href="#i-libyel"/></svg>
<svg class="a" width="12" height="12" style="left:1018px;top:217px"><circle cx="6" cy="6" r="5.5" fill="#0000e0"/><rect x="5" y="5" width="2" height="4.5" fill="#fff"/><rect x="5" y="2.5" width="2" height="1.5" fill="#fff"/></svg>
<div class="a" style="left:298px;top:294px;width:426px;height:24px;background:#bfcddb"></div>
<div class="a" style="left:298px;top:318px;width:426px;height:496px;background:#fff;border-left:1px solid #6e6e6e;border-right:1px solid #6e6e6e;border-bottom:1px solid #6e6e6e"></div>
<div class="a" style="left:706px;top:320px;width:17px;height:16px;background:#e6e6e6;border-left:1px solid #cfcfcf;border-bottom:1px solid #cfcfcf"></div>
<svg class="a" width="10" height="6" style="left:710px;top:325px"><path d="M0 0h9l-4.5 5z" fill="#000"/></svg>
<div class="a" style="left:313px;top:329px;width:6px;height:1px;border-top:1px dotted #a0a0a0"></div>
<div class="a" style="left:329px;top:338px;width:1px;height:133px;border-left:1px dotted #a0a0a0"></div>
<div class="a" style="left:333px;top:350px;width:6px;height:1px;border-top:1px dotted #a0a0a0"></div>
<div class="a" style="left:333px;top:371px;width:6px;height:1px;border-top:1px dotted #a0a0a0"></div>
<div class="a" style="left:333px;top:392px;width:6px;height:1px;border-top:1px dotted #a0a0a0"></div>
<div class="a" style="left:333px;top:413px;width:6px;height:1px;border-top:1px dotted #a0a0a0"></div>
<div class="a" style="left:333px;top:434px;width:6px;height:1px;border-top:1px dotted #a0a0a0"></div>
<div class="a" style="left:333px;top:455px;width:6px;height:1px;border-top:1px dotted #a0a0a0"></div>
<div class="a" style="left:333px;top:476px;width:6px;height:1px;border-top:1px dotted #a0a0a0"></div>
<svg class="a" width="9" height="9" style="left:304px;top:324px"><use href="#i-minus"/></svg>
<svg class="a" width="16" height="16" style="left:319px;top:321px;"><use href="#i-proj"/></svg>
<svg class="a" width="9" height="9" style="left:324px;top:345px"><use href="#i-plus"/></svg>
<svg class="a" width="16" height="16" style="left:339px;top:342px;"><use href="#i-folder"/></svg>
<svg class="a" width="9" height="9" style="left:324px;top:366px"><use href="#i-plus"/></svg>
<svg class="a" width="16" height="16" style="left:339px;top:363px;"><use href="#i-folder"/></svg>
<svg class="a" width="9" height="9" style="left:324px;top:387px"><use href="#i-plus"/></svg>
<svg class="a" width="16" height="16" style="left:339px;top:384px;"><use href="#i-folder"/></svg>
<svg class="a" width="9" height="9" style="left:324px;top:408px"><use href="#i-plus"/></svg>
<svg class="a" width="16" height="16" style="left:339px;top:405px;"><use href="#i-folder"/></svg>
<svg class="a" width="9" height="9" style="left:324px;top:429px"><use href="#i-plus"/></svg>
<svg class="a" width="16" height="16" style="left:339px;top:426px;"><use href="#i-folder"/></svg>
<svg class="a" width="9" height="9" style="left:324px;top:450px"><use href="#i-plus"/></svg>
<svg class="a" width="16" height="16" style="left:339px;top:447px;"><use href="#i-folder"/></svg>
<svg class="a" width="9" height="9" style="left:324px;top:471px"><use href="#i-plus"/></svg>
<svg class="a" width="16" height="16" style="left:339px;top:468px;"><use href="#i-folder"/></svg>
<div class="a" style="left:299px;top:797px;width:424px;height:16px;background:#f0f0f0"></div>
<div class="a" style="left:316px;top:797px;width:353px;height:16px;background:#cdcdcd"></div>
<svg class="a" width="8" height="9" style="left:304px;top:800px"><path d="M6 1L2 4.5 6 8" stroke="#555" stroke-width="2" fill="none"/></svg>
<svg class="a" width="8" height="9" style="left:710px;top:800px"><path d="M2 1l4 3.5L2 8" stroke="#555" stroke-width="2" fill="none"/></svg>
<div class="a" style="left:728px;top:294px;width:848px;height:24px;background:#bfcddb"></div>
<div class="a" style="left:728px;top:318px;width:848px;height:496px;background:#f0f0f0"></div>
<div class="a" style="left:728px;top:318px;width:1px;height:496px;background:#d0d0d0"></div>
<div class="a" style="left:729px;top:318px;width:44px;height:20px;background:#fff"></div>
<div class="a" style="left:773px;top:318px;width:1px;height:20px;background:#d9d9d9"></div>
<div class="a" style="left:729px;top:337px;width:845px;height:1px;background:#d9d9d9"></div>
<div class="a" style="left:729px;top:338px;width:844px;height:472px;background:#fff"></div>
<div class="a" style="left:1573px;top:337px;width:1px;height:474px;background:#d9d9d9"></div>
<div class="a" style="left:729px;top:810px;width:845px;height:1px;background:#d9d9d9"></div>
<div class="a" style="left:1557px;top:338px;width:16px;height:472px;background:#fafafa"></div>
<svg class="a" width="10" height="6" style="left:1560px;top:345px"><path d="M0 5.5h9L4.5 0.5z" fill="#8a8a8a"/></svg>
<svg class="a" width="10" height="6" style="left:1560px;top:796px"><path d="M0 0.5h9L4.5 5.5z" fill="#8a8a8a"/></svg>
<div class="a" style="left:1560px;top:357px;width:9px;height:209px;background:#8a8a8a;border-radius:4.5px"></div>
<div class="a" style="left:1577px;top:73px;width:4px;height:745px;background:#fafafa"></div>
<div class="a" style="left:1581px;top:73px;width:74px;height:742px;background:#f0f0f0;border-left:1px solid #7d8590;border-top:1px solid #8e8e8e;border-bottom:1px solid #7d8590"></div>
<div class="a" style="left:1582px;top:74px;width:73px;height:22px;background:#bfcddb"></div>
<div class="a" style="left:1582px;top:96px;width:73px;height:1px;background:#6e6e6e"></div>
<div class="a" style="z-index:2;left:1630px;top:87px;width:25px;height:39px;background:#f0f7ff;border-top:1px solid #1a8cff;border-bottom:1px solid #1a8cff"></div>
<div class="a" style="z-index:2;left:1613px;top:88px;width:37px;height:37px;border-radius:8px;background:linear-gradient(45deg,#38b8ff,#1a9aff 45%,#0a8aff)"></div>
<svg class="a" width="24" height="20" style="z-index:3;left:1620px;top:96px"><g fill="none" stroke="#fff" stroke-width="2.3"><circle cx="12.1" cy="6.2" r="3.5"/><circle cx="6.6" cy="12.4" r="3.5"/><path d="M9.4 14.4 C11 12.8 12.5 9.5 15 9.4 A3.5 3.5 0 1 1 14.8 15.2"/></g></svg>
<div class="a" style="left:0px;top:815px;width:1655px;height:4px;background:#f8f8f8"></div>
<div class="a" style="left:0px;top:819px;width:1655px;height:1px;background:#8e8e8e"></div>
<div class="a" style="left:0px;top:820px;width:1655px;height:22px;background:#bfcddb"></div>
<div class="a" style="left:0px;top:842px;width:302px;height:25px;background:#fff"></div>
<div class="a" style="left:302px;top:842px;width:12px;height:25px;background:#eaeaf0"></div>
<svg class="a" width="6" height="4" style="left:305px;top:852px"><path d="M0 0h5l-2.5 3z" fill="#000"/></svg>
<div class="a" style="left:314px;top:842px;width:1341px;height:25px;background:linear-gradient(#fdfdfa,#f4f4ef 30%,#e6e6dd 60%,#d4d4c6 85%,#c4c4b0)"></div>
<div class="a" style="left:0px;top:866px;width:1655px;height:2px;background:#7c8090"></div>
<div class="a" style="left:318px;top:846px;width:1px;height:17px;background:#b5b5a8"></div>
<div class="a" style="left:321px;top:843px;width:214px;height:22px;background:#eaeaf2"></div>
<div class="a" style="left:321px;top:843px;width:71px;height:22px;border:1px solid #3a6bc8"></div>
<div class="a" style="left:392px;top:843px;width:71px;height:22px;border:1px solid #3a6bc8"></div>
<div class="a" style="left:463px;top:843px;width:71px;height:22px;border:1px solid #3a6bc8"></div>
<svg class="a" width="12" height="12" style="left:324px;top:847px"><circle cx="6" cy="6" r="5.5" fill="#dd1010"/><path d="M3.8 3.8l4.4 4.4M8.2 3.8l-4.4 4.4" stroke="#fff" stroke-width="1.8"/></svg>
<svg class="a" width="12" height="12" style="left:395px;top:847px"><circle cx="6" cy="6" r="5.5" fill="#f0f000" stroke="#888" stroke-width="0.8"/><rect x="5.3" y="2.5" width="1.4" height="4.5" fill="#000"/><rect x="5.3" y="8" width="1.4" height="1.4" fill="#000"/></svg>
<svg class="a" width="12" height="12" style="left:466px;top:847px"><circle cx="6" cy="6" r="5.5" fill="#0000d0"/><rect x="5" y="5" width="2" height="4.5" fill="#fff"/><rect x="5" y="2.5" width="2" height="1.5" fill="#fff"/></svg>
<div class="a" style="left:537px;top:847px;width:1px;height:16px;background:#b5b5a8"></div>
<div class="a" style="left:538px;top:847px;width:1px;height:16px;background:#fff"></div>
<svg class="a" width="14" height="14" style="left:543px;top:847px"><path d="M1.5 1.5l5.5 5.5" stroke="#333" stroke-width="1.8" stroke-dasharray="1.2 0.4"/><path d="M7 7l6 6" stroke="#333" stroke-width="0.9"/><path d="M2 12.5l5-5.5" stroke="#333" stroke-width="2" stroke-dasharray="1.2 0.4"/><path d="M7 7l5.5-5.5" stroke="#333" stroke-width="1"/></svg>
<svg class="a" width="16" height="17" style="left:566px;top:845px"><path d="M1.5 1.5l11 11M2 10.5L12 1.5" stroke="#333" stroke-width="1.5"/><path d="M2.5 4.5l11 11M2.5 15.5L14 4.5" stroke="#222" stroke-width="1.5"/><path d="M3 9l3 -1.5M4 8.5l2 2" stroke="#000" stroke-width="2"/></svg>
<div class="a" style="left:0px;top:868px;width:1654px;height:46px;background:#fff"></div>
<div class="a" style="left:1653px;top:868px;width:1px;height:47px;background:#d8d8d8"></div>
<div class="a" style="left:0px;top:914px;width:1654px;height:1px;background:#dcdcdc"></div>
<svg class="a" width="11" height="11" style="left:2px;top:897px"><circle cx="5.5" cy="5.5" r="5" fill="#dd1010"/><path d="M3.5 3.5l4 4M7.5 3.5l-4 4" stroke="#fff" stroke-width="1.6"/></svg>
<div class="a" style="left:0px;top:915px;width:1655px;height:39px;background:#fff"></div>
<span class="t" style="left:8px;top:4.84px;font-size:12px;line-height:12px;">文件</span>
<span class="t" style="left:52px;top:4.84px;font-size:12px;line-height:12px;">编辑</span>
<span class="t" style="left:96px;top:4.84px;font-size:12px;line-height:12px;">视图</span>
<span class="t" style="left:140px;top:4.84px;font-size:12px;line-height:12px;">工程</span>
<span class="t" style="left:184px;top:4.84px;font-size:12px;line-height:12px;">库</span>
<span class="t" style="left:216px;top:4.84px;font-size:12px;line-height:12px;">编译</span>
<span class="t" style="left:260px;top:4.84px;font-size:12px;line-height:12px;">在线</span>
<span class="t" style="left:304px;top:4.84px;font-size:12px;line-height:12px;">调试</span>
<span class="t" style="left:348px;top:4.84px;font-size:12px;line-height:12px;">工具</span>
<span class="t" style="left:392px;top:4.84px;font-size:12px;line-height:12px;">窗口</span>
<span class="t" style="left:436px;top:4.84px;font-size:12px;line-height:12px;">帮助</span>
<span class="t" style="left:558px;top:30.42px;font-size:12.5px;line-height:12.5px;letter-spacing:-0.039px;">Application [Device: PLC逻辑]</span>
<span class="t" style="left:0px;top:78.84px;font-size:12px;line-height:12px;">设备</span>
<span class="t" style="left:36px;top:102.69px;font-size:11px;line-height:11px;letter-spacing:0.176px;font-style:italic">can_test</span>
<span class="t" style="left:55px;top:123.69px;font-size:11px;line-height:11px;letter-spacing:-0.459px;">Device (GCAN-PLC-M Series)</span>
<span class="t" style="left:75px;top:144.69px;font-size:11px;line-height:11px;">PLC逻辑</span>
<span class="t" style="left:95px;top:165.69px;font-size:11px;line-height:11px;letter-spacing:0.192px;font-weight:bold">Application</span>
<span class="t" style="left:115px;top:186.69px;font-size:11px;line-height:11px;font-size:12px">库管理器</span>
<span class="t" style="left:115px;top:207.69px;font-size:11px;line-height:11px;letter-spacing:-0.023px;">convert (PRG)</span>
<span class="t" style="left:115px;top:228.69px;font-size:11px;line-height:11px;letter-spacing:-0.814px;">PLC_PRG (PRG)</span>
<span class="t" style="left:115px;top:249.69px;font-size:11px;line-height:11px;font-size:12px">任务配置</span>
<span class="t" style="left:135px;top:270.69px;font-size:11px;line-height:11px;letter-spacing:-0.309px;">MainTask</span>
<span class="t" style="left:155px;top:291.69px;font-size:11px;line-height:11px;letter-spacing:-1.194px;">PLC_PRG</span>
<span class="t" style="left:0px;top:451.84px;font-size:12px;line-height:12px;">程序组织单元</span>
<span class="t" style="left:36px;top:475.69px;font-size:11px;line-height:11px;letter-spacing:0.176px;font-style:italic">can_test</span>
<span class="t" style="left:55px;top:496.69px;font-size:11px;line-height:11px;font-size:12px">工程设置</span>
<span class="t" style="left:342px;top:80.69px;font-size:11px;line-height:11px;letter-spacing:-0.908px;">PLC_PRG</span>
<span class="t" style="left:445px;top:80.69px;font-size:11px;line-height:11px;letter-spacing:0.132px;">convert</span>
<span class="t" style="left:538px;top:79.84px;font-size:12px;line-height:12px;letter-spacing:1.000px;font-weight:bold">库管理器</span>
<span class="t" style="left:319px;top:102.84px;font-size:12px;line-height:12px;letter-spacing:0.000px;">添加库</span>
<span class="t" style="left:383px;top:102.84px;font-size:12px;line-height:12px;letter-spacing:0.000px;">删除库</span>
<span class="t" style="left:453px;top:102.84px;font-size:12px;line-height:12px;letter-spacing:0.000px;">属性</span>
<span class="t" style="left:505px;top:102.84px;font-size:12px;line-height:12px;letter-spacing:0.000px;">详细信息</span>
<span class="t" style="left:588px;top:102.84px;font-size:12px;line-height:12px;letter-spacing:0.000px;">占位符</span>
<span class="t" style="left:650px;top:102.84px;font-size:12px;line-height:12px;letter-spacing:-0.169px;">库参数...</span>
<span class="t" style="left:730px;top:102.84px;font-size:12px;line-height:12px;letter-spacing:0.000px;">库存储</span>
<span class="t" style="left:793px;top:102.84px;font-size:12px;line-height:12px;letter-spacing:-0.203px;">图例...</span>
<span class="t" style="left:854px;top:102.84px;font-size:12px;line-height:12px;letter-spacing:-0.003px;">概要...</span>
<span class="t" style="left:303px;top:127.84px;font-size:12px;line-height:12px;letter-spacing:-0.181px;">应用程序"Device.Application"中使用的库</span>
<span class="t" style="left:306px;top:152.84px;font-size:12px;line-height:12px;">名称</span>
<span class="t" style="left:862px;top:152.84px;font-size:12px;line-height:12px;">命名空间</span>
<span class="t" style="left:952px;top:152.84px;font-size:12px;line-height:12px;">有效的版本</span>
<span class="t" style="left:344px;top:176.69px;font-size:11px;line-height:11px;color:#6d6d6d;letter-spacing:-0.172px;">3SLicense = 3SLicense, 3.5.18.0 (3S - Smart Software Solutions GmbH)</span>
<span class="t" style="left:861px;top:176.69px;font-size:11px;line-height:11px;color:#6d6d6d;letter-spacing:-0.706px;">_3S_LICENSE</span>
<span class="t" style="left:952px;top:176.69px;font-size:11px;line-height:11px;color:#6d6d6d;letter-spacing:0.154px;">3.5.18.0</span>
<span class="t" style="left:344px;top:197.69px;font-size:11px;line-height:11px;color:#6d6d6d;letter-spacing:-0.130px;">CAA Device Diagnosis = CAA Device Diagnosis, 3.5.15.0 (CAA Technical Workgroup)</span>
<span class="t" style="left:861px;top:197.69px;font-size:11px;line-height:11px;color:#6d6d6d;letter-spacing:-1.078px;">DED</span>
<span class="t" style="left:952px;top:197.69px;font-size:11px;line-height:11px;color:#6d6d6d;letter-spacing:0.154px;">3.5.15.0</span>
<span class="t" style="left:344px;top:218.69px;font-size:11px;line-height:11px;color:#000;letter-spacing:-0.202px;">GCAN_Fieldbus = GCAN Fieldbus Library, 1.1.0.0 (GCAN -Shenyang Guangcheng Technology CO.LTD)</span>
<span class="t" style="left:861px;top:218.69px;font-size:11px;line-height:11px;color:#000;letter-spacing:-0.945px;">GCAN</span>
<span class="t" style="left:952px;top:218.69px;font-size:11px;line-height:11px;color:#000;letter-spacing:0.194px;">1.1.0.0</span>
<span class="t" style="left:344px;top:239.69px;font-size:11px;line-height:11px;color:#6d6d6d;letter-spacing:0.093px;">IoStandard = IoStandard, 3.5.16.0 (System)</span>
<span class="t" style="left:861px;top:239.69px;font-size:11px;line-height:11px;color:#6d6d6d;letter-spacing:0.017px;">IoStandard</span>
<span class="t" style="left:952px;top:239.69px;font-size:11px;line-height:11px;color:#6d6d6d;letter-spacing:0.154px;">3.5.16.0</span>
<span class="t" style="left:303px;top:300.84px;font-size:12px;line-height:12px;letter-spacing:-0.408px;">所选库"GCAN Fieldbus Library, 1.1.0.0 (GCAN -Shenyang Guangcheng Technology</span>
<div class="a" style="left:338px;top:319px;width:368px;height:20px;overflow:hidden"><span class="t" style="left:3px;top:5.69px;font-size:11px;line-height:11px;letter-spacing:-0.164px;font-style:italic">GCAN Fieldbus Library, 1.1.0.0 (GCAN -Shenyang Guangcheng Technology (</span></div>
<span class="t" style="left:361px;top:345.69px;font-size:11px;line-height:11px;letter-spacing:-0.333px;">4GWifi</span>
<span class="t" style="left:361px;top:366.69px;font-size:11px;line-height:11px;letter-spacing:-0.523px;">CanBus</span>
<span class="t" style="left:361px;top:387.69px;font-size:11px;line-height:11px;letter-spacing:-0.386px;">CANopen</span>
<span class="t" style="left:361px;top:408.69px;font-size:11px;line-height:11px;letter-spacing:0.154px;">Ethenet</span>
<span class="t" style="left:361px;top:429.69px;font-size:11px;line-height:11px;letter-spacing:-0.190px;">Modbus</span>
<span class="t" style="left:361px;top:450.69px;font-size:11px;line-height:11px;letter-spacing:-0.793px;">MQTT</span>
<span class="t" style="left:361px;top:471.69px;font-size:11px;line-height:11px;letter-spacing:-0.484px;">SerialCom</span>
<span class="t" style="left:733px;top:300.84px;font-size:12px;line-height:12px;letter-spacing:0.279px;">有关所选库元素"概述"的详细信息</span>
<span class="t" style="left:736px;top:321.84px;font-size:12px;line-height:12px;">文档</span>
<span class="t" style="left:740px;top:357.17px;font-size:26.5px;line-height:26.5px;color:#606060;letter-spacing:-0.441px;font-weight:bold">GCAN Fieldbus Library Library Documentation</span>
<span class="t" style="left:740px;top:403.45px;font-size:12.7px;line-height:12.7px;">Company:</span>
<span class="t" style="left:770px;top:421.36px;font-size:12.8px;line-height:12.8px;">GCAN -Shenyang Guangcheng Technology CO.LTD</span>
<span class="t" style="left:740px;top:446.50px;font-size:12.7px;line-height:12.7px;">Title:</span>
<span class="t" style="left:770px;top:464.41px;font-size:12.8px;line-height:12.8px;">GCAN Fieldbus Library</span>
<span class="t" style="left:740px;top:489.55px;font-size:12.7px;line-height:12.7px;">Version:</span>
<span class="t" style="left:770px;top:507.46px;font-size:12.8px;line-height:12.8px;">1.1.0.0</span>
<span class="t" style="left:740px;top:532.60px;font-size:12.7px;line-height:12.7px;">Categories:</span>
<span class="t" style="left:770px;top:550.51px;font-size:12.8px;line-height:12.8px;">GCAN|Fieldbus</span>
<span class="t" style="left:740px;top:575.65px;font-size:12.7px;line-height:12.7px;">Namespace:</span>
<span class="t" style="left:770px;top:593.56px;font-size:12.8px;line-height:12.8px;">GCAN</span>
<span class="t" style="left:740px;top:618.70px;font-size:12.7px;line-height:12.7px;">Author:</span>
<span class="t" style="left:770px;top:636.61px;font-size:12.8px;line-height:12.8px;">by GCG</span>
<span class="t" style="left:740px;top:661.75px;font-size:12.7px;line-height:12.7px;">Placeholder:</span>
<span class="t" style="left:770px;top:679.66px;font-size:12.8px;line-height:12.8px;">GCAN_Fieldbus</span>
<span class="t" style="left:740px;top:710.42px;font-size:19px;line-height:19px;letter-spacing:0.198px;font-weight:bold">Description [<u>1</u>]</span>
<span class="t" style="left:740px;top:748.75px;font-size:12.7px;line-height:12.7px;letter-spacing:0.069px;">GCAN PLC Extened Fieldbus Library</span>
<span class="t" style="left:740px;top:779.22px;font-size:19px;line-height:19px;letter-spacing:0.038px;font-weight:bold">Contents:</span>
<span class="t" style="left:1587px;top:79.84px;font-size:12px;line-height:12px;">工具箱</span>
<span class="t" style="left:0px;top:825.84px;font-size:12px;line-height:12px;letter-spacing:-0.152px;">消息 -总计1个错误,0个警告,0条消息</span>
<span class="t" style="left:0px;top:848.84px;font-size:12px;line-height:12px;">预编译</span>
<span class="t" style="left:342px;top:848.84px;font-size:12px;line-height:12px;letter-spacing:0.078px;">1个错误</span>
<span class="t" style="left:413px;top:848.84px;font-size:12px;line-height:12px;letter-spacing:0.078px;">0个警告</span>
<span class="t" style="left:484px;top:848.84px;font-size:12px;line-height:12px;letter-spacing:0.078px;">0条消息</span>
<span class="t" style="left:1px;top:874.84px;font-size:12px;line-height:12px;">描述</span>
<span class="t" style="left:19px;top:898.69px;font-size:11px;line-height:11px;letter-spacing:0.046px;">C0046:&nbsp; 没有定义标识符'Standard.SCALE'</span>
</body></html>
